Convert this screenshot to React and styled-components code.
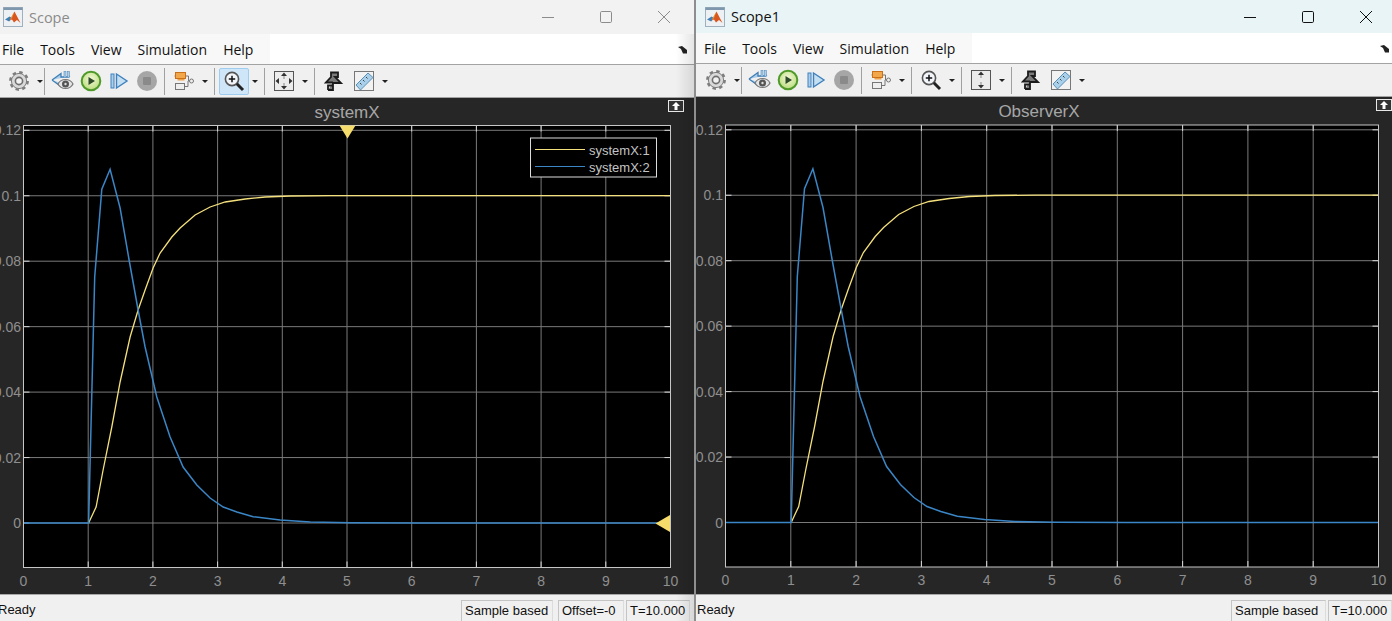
import React from "react";
import styled, { createGlobalStyle } from "styled-components";

const Global = createGlobalStyle`
  html, body { margin: 0; padding: 0; background: #f0f0f0; overflow: hidden; }
  #root { width: 1392px; height: 621px; }
`;

const Page = styled.div`
  display: flex;
  width: 1392px;
  height: 621px;
  overflow: hidden;
`;
const Divider = styled.div`
  width: 2px;
  flex: none;
  background: #8e8e8e;
`;
const Win = styled.div`
  position: relative;
  display: flex;
  flex-direction: column;
  flex: none;
  width: ${(p) => p.$w}px;
  height: 621px;
  overflow: hidden;
  ${(p) => p.$shade && `
    &::after {
      content: "";
      position: absolute;
      top: 34px;
      right: 0;
      bottom: 0;
      width: 18px;
      pointer-events: none;
      background: linear-gradient(90deg, rgba(0,0,0,0), rgba(0,0,0,.1));
    }
  `}
`;
const TitleBar = styled.div`
  display: flex;
  align-items: center;
  flex: none;
  height: ${(p) => p.$h}px;
  padding-left: ${(p) => p.$pl}px;
  background: ${(p) => p.$bg};
  box-sizing: border-box;
`;
const TitleText = styled.span`
  margin-left: 6px;
  font: 14.5px "Open Sans", "Noto Sans", sans-serif;
  color: ${(p) => p.$c};
  flex: 1;
`;
const WinButtons = styled.div`
  display: flex;
  align-items: center;
  margin-right: ${(p) => p.$mr}px;
  gap: 44px;
`;
const MenuBar = styled.div`
  display: flex;
  align-items: center;
  flex: none;
  height: 31px;
  background: #fff;
  border-bottom: 1px solid #a3a3a3;
  box-sizing: border-box;
  position: relative;
`;
const MenuItems = styled.div`
  display: flex;
  align-items: center;
  gap: 16px;
  height: 100%;
  width: ${(p) => p.$w}px;
  padding-left: ${(p) => p.$pl}px;
  box-sizing: border-box;
  background: #f8f8f8;
  font: 14px "Open Sans", "Noto Sans", sans-serif;
  color: #111;
`;
const Overflow = styled.svg`
  margin-left: auto;
  margin-right: ${(p) => p.$mr}px;
`;
const Toolbar = styled.div`
  display: flex;
  align-items: center;
  flex: none;
  height: 33px;
  background: #f0f0f0;
  border-bottom: 1px solid #a3a3a3;
  box-sizing: border-box;
  padding-left: ${(p) => p.$pl}px;
`;
const Group = styled.div`
  display: flex;
  align-items: center;
  flex: none;
  box-sizing: border-box;
  height: 27px;
  width: ${(p) => p.$w}px;
  padding-left: 4px;
  ${(p) => !p.$last && "border-right: 1px solid #a0a0a0;"}
`;
const Btn = styled.div`
  display: flex;
  align-items: center;
  justify-content: center;
  flex: none;
  width: ${(p) => p.$w || 30}px;
  height: 27px;
  box-sizing: border-box;
  border-radius: 2px;
  ${(p) => p.$on && "background: #cfe6f8; border: 1px solid #9fcdf0;"}
`;
const Caret = styled.div`
  flex: none;
  width: 12px;
  display: flex;
  justify-content: center;
  &::before {
    content: "";
    border-left: 3px solid transparent;
    border-right: 3px solid transparent;
    border-top: 3px solid #222;
  }
`;
const Panel = styled.div`
  position: relative;
  flex: 1;
  min-height: 0;
  background: #262626;
  display: flex;
  flex-direction: column;
`;
const PlotTitle = styled.div`
  flex: none;
  height: 27px;
  line-height: 30px;
  box-sizing: border-box;
  text-align: center;
  font: 17px/30px "Liberation Sans", Arial, sans-serif;
  color: #a6a6a6;
  padding-right: ${(p) => p.$pr}px;
`;
const ChartSvg = styled.svg`
  display: block;
  flex: 1;
  min-height: 0;
  overflow: hidden;
`;
const Restore = styled.div`
  position: absolute;
  top: 2px;
  right: ${(p) => p.$r}px;
  width: 16px;
  height: 12px;
  box-sizing: border-box;
  border: 1px solid #e8e8e8;
  background: #333;
  display: flex;
  align-items: center;
  justify-content: center;
`;
const StatusBar = styled.div`
  display: flex;
  align-items: flex-end;
  flex: none;
  height: 27px;
  background: #f0f0f0;
  border-top: 1px solid #a8a8a8;
  box-sizing: border-box;
  font: 13px "Liberation Sans", Arial, sans-serif;
  color: #111;
`;
const Ready = styled.span`
  flex: 1;
  align-self: center;
  margin-left: ${(p) => p.$ml}px;
  padding-top: 2px;
`;
const Cell = styled.div`
  flex: none;
  width: ${(p) => p.$w}px;
  height: ${(p) => p.$h}px;
  margin-left: ${(p) => p.$ml}px;
  padding-left: ${(p) => p.$pl || 3}px;
  box-sizing: border-box;
  line-height: 20px;
  border-top: 1px solid #c4c4c4;
  border-left: 1px solid #c4c4c4;
  border-right: 1px solid #dcdcdc;
  white-space: nowrap;
`;

const MatlabLogo = () => (
  <svg width="20" height="20" viewBox="0 0 20 20">
    <rect x="0.5" y="0.5" width="19" height="19" fill="#eef1f4" stroke="#9fb0bf" />
    <rect x="0.5" y="0.5" width="19" height="2.5" fill="#7f97ad" />
    <path d="M2 12.5 L6.5 9.5 L9 11 L6.2 14.5Z" fill="#3f7fb5" />
    <path d="M6.5 13.5 L11.5 4.5 L17.5 16 L14 13 L11 15.5 L9 12.5Z" fill="#d9561f" />
    <path d="M11.5 4.5 L9 11 L7.5 12.5 L6.5 13.5Z" fill="#f0a030" />
  </svg>
);

const WinMin = ({ c }) => (
  <svg width="14" height="14" viewBox="0 0 14 14"><path d="M1 7.5H13" stroke={c} strokeWidth="1" /></svg>
);
const WinMax = ({ c }) => (
  <svg width="14" height="14" viewBox="0 0 14 14"><rect x="1.5" y="1.5" width="11" height="11" rx="1.2" fill="none" stroke={c} strokeWidth="1" /></svg>
);
const WinClose = ({ c }) => (
  <svg width="14" height="14" viewBox="0 0 14 14"><path d="M1 1L13 13M13 1L1 13" stroke={c} strokeWidth="1" /></svg>
);

const Gear = () => (
  <svg width="22" height="22" viewBox="0 0 22 22">
    <circle cx="11" cy="11" r="8.6" fill="none" stroke="#7d7d7d" strokeWidth="2.6" strokeDasharray="3.4 3.35" />
    <circle cx="11" cy="11" r="7.6" fill="#d9d9d9" stroke="#7d7d7d" strokeWidth="1" />
    <circle cx="11" cy="11" r="3.6" fill="#f2f2f2" stroke="#6f6f6f" strokeWidth="1.6" />
  </svg>
);
const Eye = () => (
  <svg width="24" height="22" viewBox="0 0 24 22">
    <path d="M1 10L10 3.5V7H17L19 6M1 10L10 16.5V13" fill="#a9cdea" stroke="#3f7fb5" strokeWidth="1.3" />
    <rect x="13" y="1.5" width="2" height="6" fill="#a9cdea" stroke="#5a8fbd" strokeWidth=".6" />
    <rect x="16.5" y="1.5" width="2" height="6" fill="#a9cdea" stroke="#5a8fbd" strokeWidth=".6" />
    <path d="M7 14C10 8 19 8 22 14C19 20 10 20 7 14Z" fill="#e4e4e4" stroke="#777" strokeWidth="1.2" />
    <circle cx="14.5" cy="14" r="3.5" fill="#555" />
    <circle cx="14.5" cy="14" r="1.2" fill="#ddd" />
  </svg>
);
const Play = () => (
  <svg width="22" height="22" viewBox="0 0 22 22">
    <defs>
      <radialGradient id="pg" cx="50%" cy="40%" r="60%">
        <stop offset="0" stopColor="#f4f8d8" />
        <stop offset="1" stopColor="#b9dc7c" />
      </radialGradient>
    </defs>
    <circle cx="11" cy="11" r="9.3" fill="url(#pg)" stroke="#4f9a2a" strokeWidth="2" />
    <path d="M8.5 7L15 11L8.5 15Z" fill="#2f4a2a" />
  </svg>
);
const Step = () => (
  <svg width="20" height="20" viewBox="0 0 20 20">
    <rect x="2" y="3" width="3" height="14" fill="#a9cdea" stroke="#3f82bd" strokeWidth="1" />
    <path d="M7.5 3L18 10L7.5 17Z" fill="#c4def2" stroke="#3f82bd" strokeWidth="1.4" />
  </svg>
);
const Stop = () => (
  <svg width="22" height="22" viewBox="0 0 22 22">
    <circle cx="11" cy="11" r="10" fill="#a6a6a6" />
    <rect x="7" y="7" width="8" height="8" rx="1" fill="#8a8a8a" />
  </svg>
);
const Blocks = () => (
  <svg width="22" height="22" viewBox="0 0 22 22">
    <path d="M3 6H1.5M13 6H15.5V11H17M7 16H4.5" fill="none" stroke="#777" />
    <rect x="2.5" y="2.5" width="10" height="6" fill="#f2a84a" stroke="#c9701a" />
    <rect x="4.5" y="9" width="7" height="1.5" fill="#eba24a" />
    <circle cx="18.5" cy="11" r="2" fill="#eee" stroke="#777" />
    <rect x="2.5" y="13.5" width="9" height="6" fill="#eee" stroke="#777" />
    <path d="M11.5 16.5H15V11" fill="none" stroke="#777" />
  </svg>
);
const Zoom = () => (
  <svg width="22" height="22" viewBox="0 0 22 22">
    <circle cx="9" cy="9" r="6.6" fill="#f2f6fa" stroke="#555" strokeWidth="1.6" />
    <path d="M5.8 9H12.2M9 5.8V12.2" stroke="#111" strokeWidth="1.5" />
    <path d="M13.8 13.8L20 20" stroke="#222" strokeWidth="3" />
  </svg>
);
const Fit = ({ vertical }) => (
  <svg width="22" height="22" viewBox="0 0 22 22">
    <rect x="1.5" y="1.5" width="19" height="19" fill="#ececec" stroke="#555" strokeWidth="1" />
    <path d="M11 2.5L14 6H8ZM11 19.5L14 16H8Z" fill="#333" />
    {!vertical && <path d="M2.5 11L6 8V14ZM19.5 11L16 8V14Z" fill="#333" />}
    <path d="M11 6V9M11 13V16" stroke="#888" />
  </svg>
);
const Highlight = () => (
  <svg width="20" height="22" viewBox="0 0 20 22">
    <path d="M4 20H9V13H11L17 13L11 7H14V2.5H7V7L2 12.5H9" fill="#7a7a7a" stroke="#1b1b1b" strokeWidth="1.8" strokeLinejoin="miter" />
    <path d="M4 20V15.5H9" fill="none" stroke="#1b1b1b" strokeWidth="1.8" />
  </svg>
);
const Ruler = () => (
  <svg width="22" height="22" viewBox="0 0 22 22">
    <rect x="1.5" y="1.5" width="19" height="19" fill="#f2f2f2" stroke="#777" />
    <path d="M3 15L15 3L20 7.5L7.5 20Z" fill="#a9d0ea" stroke="#5b8fb5" />
    <path d="M7 13L8.5 14.5M10 10L11.5 11.5M13 7L14.5 8.5" stroke="#444" />
  </svg>
);

const TOP = [
  [88.5, 523], [94.6, 277], [101.7, 189.3], [110, 169.3], [120, 208], [129, 260], [138, 310],
  [145, 347], [156.7, 397], [170, 437], [183, 467], [196.7, 485], [210, 498], [223, 507],
  [236.7, 512], [253, 516.7], [280, 520], [310, 522], [350, 522.8], [420, 523], [670, 523],
];
const BLUE = [[23.5, 523], ...TOP];
const YELLOW = [
  [88.5, 523], [96, 507], [103, 470], [111.7, 427], [120, 382], [130, 337], [138, 310], [145, 290],
  [153, 268], [160, 253], [171.7, 237], [180, 228], [195, 215], [210, 207], [225, 202], [245, 199],
  [265, 197], [290, 196], [330, 195.6], [670, 195.6],
];

const Chart = ({ w, h, x0, x1, top, bottom, y0, showLegend, markers, yTop }) => {
  const dx = (x1 - x0) / 10;
  const sx = (x) => x0 + ((x - 23.5) * (x1 - x0)) / 646.5;
  const sy = (y) => y0 + (y - 523);
  const unit = 39.27 * 5 * 0.8325 * 2; // px per 0.1
  const map = (pts) => pts.map(([x, y]) => `${sx(x).toFixed(1)},${sy(y).toFixed(1)}`).join(" ");
  const xs = Array.from({ length: 11 }, (_, i) => x0 + i * dx);
  const ys = [0, 0.02, 0.04, 0.06, 0.08, 0.1, 0.12].map((v) => ({ v, y: y0 - (v / 0.12) * (y0 - yTop) }));
  return (
    <ChartSvg width={w} height={h} viewBox={`0 0 ${w} ${h}`}>
      <rect x={x0} y={top} width={x1 - x0} height={bottom - top} fill="#000" />
      {xs.slice(1, 10).map((x) => (
        <path key={x} d={`M${x} ${top}V${bottom}`} stroke="#7a7a7a" strokeWidth="1" />
      ))}
      {ys.map(({ y, v }) => (
        <path key={v} d={`M${x0} ${y}H${x1}`} stroke="#7a7a7a" strokeWidth="1" />
      ))}
      {xs.map((x) => (
        <path key={x} d={`M${x} ${top}v6M${x} ${bottom}v-6`} stroke="#d8d8d8" strokeWidth="1" />
      ))}
      {ys.map(({ y, v }) => (
        <path key={v} d={`M${x0} ${y}h6M${x1} ${y}h-6`} stroke="#d8d8d8" strokeWidth="1" />
      ))}
      <polyline points={map(YELLOW)} fill="none" stroke="#f4e07c" strokeWidth="1.3" />
      <polyline points={map(BLUE)} fill="none" stroke="#3b86c6" strokeWidth="1.5" />
      <rect x={x0} y={top} width={x1 - x0} height={bottom - top} fill="none" stroke="#c6c6c6" strokeWidth="1" />
      <g fontFamily="'Liberation Sans', Arial, sans-serif" fontSize="14" fill="#8f8f8f">
        {ys.map(({ y, v }) => (
          <text key={v} x={x0 - 2.5} y={y + 5} textAnchor="end">{v === 0 ? "0" : String(v)}</text>
        ))}
        {xs.map((x, i) => (
          <text key={x} x={x} y={bottom + 18} textAnchor="middle">{i}</text>
        ))}
      </g>
      {showLegend && (
        <g>
          <rect x="530.5" y="13" width="126" height="39" fill="#000" stroke="#dcdcdc" strokeWidth="1" />
          <path d="M535 24.5H585" stroke="#f4e07c" strokeWidth="1.2" />
          <path d="M535 41.5H585" stroke="#3b86c6" strokeWidth="1.2" />
          <g fontFamily="'Liberation Sans', Arial, sans-serif" fontSize="13" fill="#c4c4c4">
            <text x="589" y="30">systemX:1</text>
            <text x="589" y="47">systemX:2</text>
          </g>
        </g>
      )}
      {markers && (
        <g fill="#f6dc6a">
          <path d="M339.5 0.5H355.5L347.5 13.5Z" />
          <path d="M670 515V532L655.5 523.5Z" transform="translate(0,-125)" />
        </g>
      )}
    </ChartSvg>
  );
};

const Tools = ({ zoomOn, vertical }) => (
  <>
    <Group $w={45}><Btn><Gear /></Btn><Caret /></Group>
    <Group $w={120}>
      <Btn $w={28}><Eye /></Btn>
      <Btn $w={28}><Play /></Btn>
      <Btn $w={28}><Step /></Btn>
      <Btn $w={28}><Stop /></Btn>
    </Group>
    <Group $w={50}><Btn><Blocks /></Btn><Caret /></Group>
    <Group $w={50}><Btn $on={zoomOn}><Zoom /></Btn><Caret /></Group>
    <Group $w={50}><Btn><Fit vertical={vertical} /></Btn><Caret /></Group>
    <Group $w={100} $last><Btn><Highlight /></Btn><Btn><Ruler /></Btn><Caret /></Group>
  </>
);

const OverflowIcon = ({ mr }) => (
  <Overflow $mr={mr} width="10" height="9" viewBox="0 0 10 9">
    <path d="M0 2L4 1L9 5V8.5H5L3 4Z" fill="#222" />
  </Overflow>
);

const Menu = () => (
  <>
    <span>File</span><span>Tools</span><span>View</span><span>Simulation</span><span>Help</span>
  </>
);

export default function App() {
  return (
    <Page>
      <Global />
      <Win $w={694} $shade>
        <TitleBar $h={34} $pl={3} $bg="#f2f2f2">
          <MatlabLogo />
          <TitleText $c="#8a8a8a">Scope</TitleText>
          <WinButtons $mr={23}>
            <WinMin c="#8c8c8c" /><WinMax c="#8c8c8c" /><WinClose c="#8c8c8c" />
          </WinButtons>
        </TitleBar>
        <MenuBar>
          <MenuItems $w={270} $pl={2}><Menu /></MenuItems>
          <OverflowIcon mr={6} />
        </MenuBar>
        <Toolbar $pl={0}>
          <Tools zoomOn />
        </Toolbar>
        <Panel>
          <PlotTitle $pr={0}>systemX</PlotTitle>
          <Restore $r={10}>
            <svg width="10" height="8" viewBox="0 0 10 8"><path d="M5 0L9 4H6.5V8H3.5V4H1Z" fill="#fff" /></svg>
          </Restore>
          <Chart w={694} h={469} x0={23.5} x1={670.5} top={0.5} bottom={442.5} y0={398} yTop={5.3} showLegend markers />
        </Panel>
        <StatusBar>
          <Ready $ml={-2}>Ready</Ready>
          <Cell $w={92} $h={21} $ml={0}>Sample based</Cell>
          <Cell $w={66} $h={21} $ml={5}>Offset=-0</Cell>
          <Cell $w={64} $h={21} $ml={2}>T=10.000</Cell>
          <Cell $w={4} $h={21} $ml={0} $pl={0} style={{ border: "none" }} />
        </StatusBar>
      </Win>
      <Divider />
      <Win $w={696}>
        <TitleBar $h={33} $pl={9} $bg="#e9f4f6">
          <MatlabLogo />
          <TitleText $c="#111">Scope1</TitleText>
          <WinButtons $mr={19}>
            <WinMin c="#111" /><WinMax c="#111" /><WinClose c="#111" />
          </WinButtons>
        </TitleBar>
        <MenuBar>
          <MenuItems $w={276} $pl={8}><Menu /></MenuItems>
          <OverflowIcon mr={2} />
        </MenuBar>
        <Toolbar $pl={1}>
          <Tools vertical />
        </Toolbar>
        <Panel>
          <PlotTitle $pr={10}>ObserverX</PlotTitle>
          <Restore $r={0}>
            <svg width="10" height="8" viewBox="0 0 10 8"><path d="M5 0L9 4H6.5V8H3.5V4H1Z" fill="#fff" /></svg>
          </Restore>
          <Chart w={696} h={469} x0={29.5} x1={682.5} top={0.5} bottom={442.5} y0={398} yTop={5.3} />
        </Panel>
        <StatusBar>
          <Ready $ml={1}>Ready</Ready>
          <Cell $w={95} $h={21} $ml={0}>Sample based</Cell>
          <Cell $w={64} $h={21} $ml={2}>T=10.000</Cell>
        </StatusBar>
      </Win>
    </Page>
  );
}
